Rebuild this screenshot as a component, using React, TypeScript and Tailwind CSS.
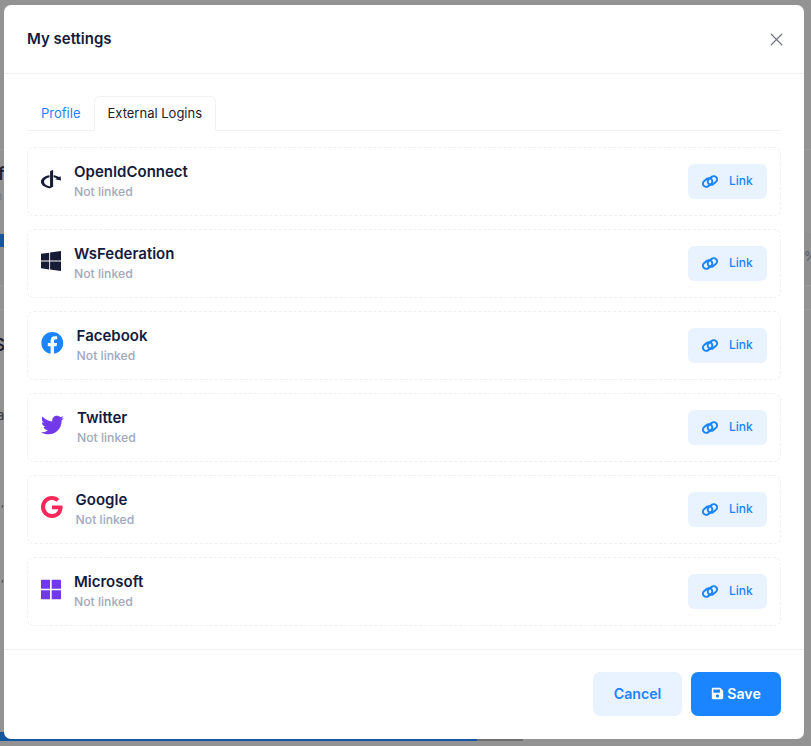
import { X } from "lucide-react";
import { FaFacebook, FaGoogle, FaOpenid, FaSave, FaTwitter, FaWindows } from "react-icons/fa";
import type { ReactNode } from "react";

function LinkIcon() {
  return (
    <svg viewBox="0 0 16 15" className="h-[15px] w-[16px]" fill="none" stroke="currentColor" strokeWidth="2">
      <rect x="0.6" y="5.200" width="10" height="6.600" rx="3.300" transform="rotate(-38 5.600 8.500)" />
      <rect x="5.400" y="3.200" width="10" height="6.600" rx="3.300" transform="rotate(-38 10.400 6.500)" />
    </svg>
  );
}

function MicrosoftIcon() {
  return (
    <svg viewBox="0 0 20 20" className="h-[20px] w-[20px] text-[#7239ea]" fill="currentColor">
      <path d="M1 0h8v9.300H0V1a1 1 0 0 1 1-1z" />
      <path d="M10.700 0H19a1 1 0 0 1 1 1v8.300h-9.300z" />
      <path d="M0 10.700h9v9.300H1a1 1 0 0 1-1-1z" />
      <path d="M10.700 10.700H20V19a1 1 0 0 1-1 1h-8.300z" />
    </svg>
  );
}

const providers: { name: string; icon: ReactNode }[] = [
  { name: "OpenIdConnect", icon: <FaOpenid className="h-[23px] w-[20px] text-[#161b36]" /> },
  { name: "WsFederation", icon: <FaWindows className="h-[23px] w-[20px] text-[#161b36]" /> },
  { name: "Facebook", icon: <FaFacebook className="h-[23px] w-[22.6px] text-[#1b84ff]" /> },
  { name: "Twitter", icon: <FaTwitter className="h-[23px] w-[23px] text-[#7239ea]" /> },
  { name: "Google", icon: <FaGoogle className="h-[23px] w-[21.6px] text-[#f8285a]" /> },
  { name: "Microsoft", icon: <MicrosoftIcon /> },
];

function ProviderRow({ name, icon }: { name: string; icon: ReactNode }) {
  return (
    <div className="flex h-[69px] items-center justify-between rounded-[7px] border border-dashed border-[#eef0f3] px-[13px]">
      <div className="flex items-center">
        <div className="mr-[13px] flex h-[23px] -translate-y-[2.5px] items-center">{icon}</div>
        <div className="mt-[1px] flex flex-col">
          <span className="text-[15px] leading-[20px] font-semibold text-[#141b3c]">{name}</span>
          <span className="text-[12.2px] leading-[20px] font-medium text-[#a1a8bd]">Not linked</span>
        </div>
      </div>
      <button className="flex h-[35px] w-[79px] items-center rounded-[6px] bg-[#e9f3ff] pl-[14px] text-[12px] font-medium text-[#1b84ff]">
        <LinkIcon />
        <span className="mb-[2px] ml-[11px]">Link</span>
      </button>
    </div>
  );
}

export default function App() {
  return (
    <div className="relative h-[746px] overflow-hidden bg-[#939393] font-[Inter,sans-serif]">
      {/* page behind the backdrop */}
      <div className="absolute inset-x-0 top-[149px] h-px bg-[#9a9a9a]" />
      <div className="absolute inset-x-0 top-[233px] h-[52px] bg-[#909090]" />
      <div className="absolute inset-x-0 top-[285px] h-px bg-[#9a9a9a]" />
      <div className="absolute inset-x-0 top-[309px] h-px bg-[#9a9a9a]" />
      <div className="absolute left-0 top-[234px] h-[13px] w-[6px] bg-[#14569e]" />
      <div className="absolute left-0 top-[732px] h-[9px] w-[477px] bg-[#14569e]" />
      <div className="absolute left-[477px] top-[739px] h-[2px] w-[46px] bg-[#6f6f6f]" />
      <span className="absolute left-[-2px] top-[162px] text-[17px] font-semibold text-[#1e2230]">f</span>
      <span className="absolute left-[-5px] top-[187px] text-[12px] font-medium text-[#7c7f8a]">n</span>
      <span className="absolute left-[-6px] top-[333px] text-[17px] font-semibold text-[#1e2230]">S</span>
      <span className="absolute left-[-3px] top-[406px] text-[13px] font-medium text-[#3f4350]">a</span>
      <span className="absolute left-[1px] top-[495px] text-[10px] font-medium text-[#3f4350]">,</span>
      <span className="absolute left-[1px] top-[570px] text-[10px] font-medium text-[#3f4350]">,</span>
      <span className="absolute left-[804px] top-[247px] text-[13px] font-medium text-[#5a5e6e]">%</span>

      <div className="absolute left-[4px] top-[5px] flex h-[734px] w-[800px] flex-col rounded-[7px] bg-white">
        <div className="flex h-[69px] shrink-0 items-center justify-between border-b border-[#eff1f4] pl-[23px] pr-[17px]">
          <h2 className="text-[15px] font-semibold text-[#141b3c]">My settings</h2>
          <X className="h-[21px] w-[21px] text-[#6f7580]" strokeWidth={1.4} />
        </div>

        <div className="flex-1 px-[23px] pt-[22px]">
          <div className="flex h-[35px] border-b border-[#eff1f4]">
            <span className="flex h-[35px] w-[67px] items-center pl-[14px] text-[13px] text-[#1b84ff]">Profile</span>
            <span className="flex h-[35px] w-[122px] items-center rounded-t-[6px] border border-[#eff1f4] border-b-white pl-[12.5px] text-[13px] text-[#1e2129]">
              External Logins
            </span>
          </div>
          <div className="mt-[16px] flex flex-col gap-[13px]">
            {providers.map((p) => (
              <ProviderRow key={p.name} name={p.name} icon={p.icon} />
            ))}
          </div>
        </div>

        <div className="flex h-[90px] shrink-0 items-start justify-end gap-[9px] border-t border-[#eff1f4] pr-[23px] pt-[22px]">
          <button className="h-[44px] w-[89px] rounded-[7px] bg-[#e9f3ff] pb-[1px] text-[14.2px] font-semibold text-[#1b84ff]">Cancel</button>
          <button className="flex h-[44px] w-[90px] items-center justify-center gap-[3px] rounded-[7px] bg-[#1b84ff] pb-[1px] text-[14.2px] font-semibold text-white">
            <FaSave className="h-[13px] w-[13px]" />
            <span>Save</span>
          </button>
        </div>
      </div>
    </div>
  );
}
